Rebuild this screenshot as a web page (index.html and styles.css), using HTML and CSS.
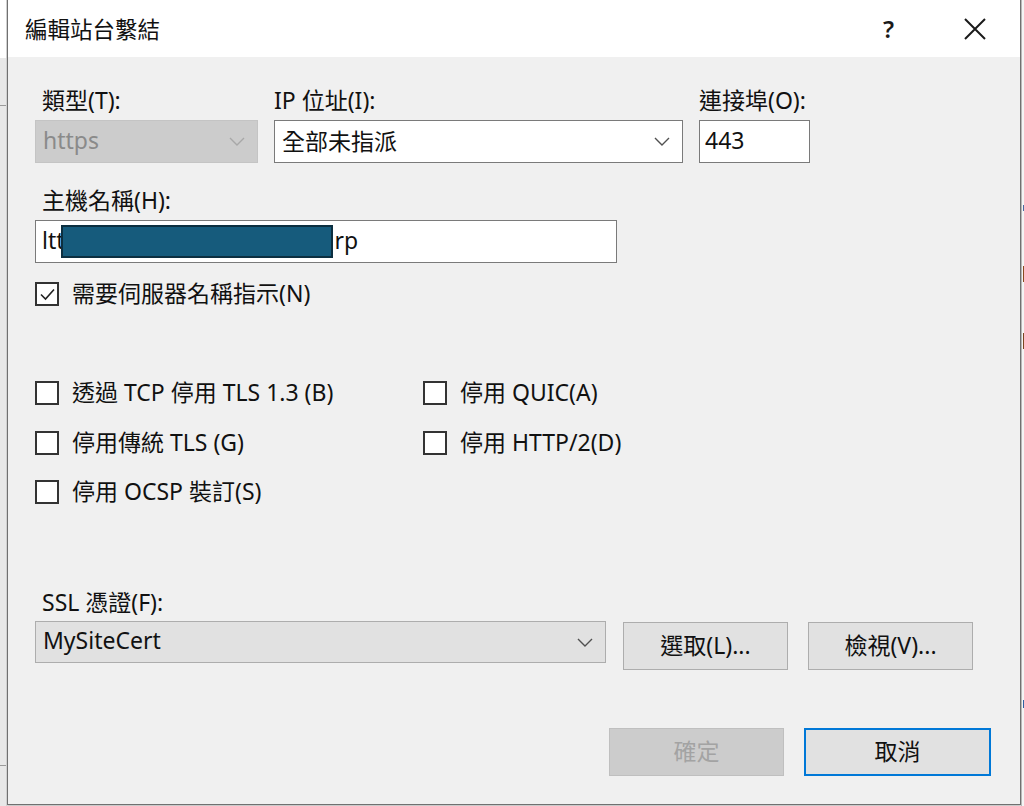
FILE: index.html
```html
<!DOCTYPE html>
<html lang="zh-Hant">
<head>
<meta charset="utf-8">
<title>編輯站台繫結</title>
<link rel="stylesheet" href="styles.css">
</head>
<body>
<div class="screen">
  <div class="bg-left"><span class="bg-tick t1"></span><span class="bg-tick t2"></span></div>
  <div class="dialog">
    <div class="titlebar">
      <div class="title">編輯站台繫結</div>
      <div class="title-actions">
        <span class="help">?</span>
        <svg class="close" width="22" height="22" viewBox="0 0 22 22"><path d="M1 1 L21 21 M21 1 L1 21" stroke="#1a1a1a" stroke-width="2" fill="none"/></svg>
      </div>
    </div>
    <div class="content">
      <div class="row-top">
        <div class="field">
          <div class="label indent">類型(T):</div>
          <div class="select disabled"><span class="txt">https</span>
            <svg class="chev" width="16" height="9" viewBox="0 0 16 9"><path d="M1 1 L8 8 L15 1" stroke="#a8a8a8" stroke-width="1.4" fill="none"/></svg></div>
        </div>
        <div class="field">
          <div class="label">IP 位址(I):</div>
          <div class="select white"><span class="txt">全部未指派</span>
            <svg class="chev" width="16" height="9" viewBox="0 0 16 9"><path d="M1 1 L8 8 L15 1" stroke="#505050" stroke-width="1.4" fill="none"/></svg></div>
        </div>
        <div class="field">
          <div class="label">連接埠(O):</div>
          <div class="textbox"><span class="txt">443</span></div>
        </div>
      </div>

      <div class="label indent host-label">主機名稱(H):</div>
      <div class="textbox host"><span class="txt">ltt</span><span class="redact"></span><span class="txt">rp</span></div>

      <div class="check sni"><span class="box checked"><svg width="19" height="19" viewBox="0 0 19 19"><path d="M3 9.5 L7.5 14 L16 4.5" stroke="#222" stroke-width="1.6" fill="none"/></svg></span><span class="txt">需要伺服器名稱指示(N)</span></div>

      <div class="check-grid">
        <div class="check"><span class="box"></span><span class="txt">透過 TCP 停用 TLS 1.3 (B)</span></div>
        <div class="check"><span class="box"></span><span class="txt">停用 QUIC(A)</span></div>
        <div class="check"><span class="box"></span><span class="txt">停用傳統 TLS (G)</span></div>
        <div class="check"><span class="box"></span><span class="txt">停用 HTTP/2(D)</span></div>
        <div class="check"><span class="box"></span><span class="txt">停用 OCSP 裝訂(S)</span></div>
      </div>

      <div class="label indent ssl-label">SSL 憑證(F):</div>
      <div class="cert-row">
        <div class="select gray"><span class="txt">MySiteCert</span>
          <svg class="chev" width="16" height="9" viewBox="0 0 16 9"><path d="M1 1 L8 8 L15 1" stroke="#505050" stroke-width="1.4" fill="none"/></svg></div>
        <div class="btn"><span class="txt">選取(L)...</span></div>
        <div class="btn"><span class="txt">檢視(V)...</span></div>
      </div>

      <div class="footer">
        <div class="btn ok"><span class="txt">確定</span></div>
        <div class="btn cancel"><span class="txt">取消</span></div>
      </div>
    </div>
  </div>
  <div class="bg-right"><span class="mark m1"></span><span class="mark m2"></span><span class="mark m3"></span><span class="mark m4"></span></div>
</div>
</body>
</html>
```

FILE: styles.css
```css
* { box-sizing: border-box; }
html, body { margin: 0; padding: 0; }
body {
  width: 1024px;
  height: 806px;
  overflow: hidden;
  background: #f3f3f3;
  font-family: "Noto Sans", "Noto Sans CJK TC", sans-serif;
  font-size: 23px;
  color: #111;
}
.screen {
  display: flex;
  height: 806px;
}
.bg-left {
  width: 7px;
  position: relative;
  background: linear-gradient(#ffffff 0, #ffffff 58px, #e8e8e8 58px);
  border-right: 1px solid #d0d0d0;
}
.bg-tick { position: absolute; left: 0; width: 6px; height: 1px; background: #9a9a9a; }
.bg-tick.t1 { top: 105px; }
.bg-tick.t2 { top: 765px; }
.dialog {
  width: 1014px;
  height: 805px;
  background: #f0f0f0;
  border: 1px solid #707070;
  border-top: none;
  display: flex;
  flex-direction: column;
  box-shadow: 0 1px 2px rgba(0,0,0,0.25);
}
.bg-right {
  flex: 1;
  position: relative;
  background: #f4f4f4;
  border-left: 1px solid #b8b8b8;
}
.mark { position: absolute; left: 1px; width: 2px; height: 16px; }
.mark.m1 { top: 205px; background: #4a6aa0; height: 6px; }
.mark.m2 { top: 266px; background: #8a4a20; }
.mark.m3 { top: 333px; background: #7a4520; }
.mark.m4 { top: 700px; background: #3060a0; height: 8px; }

.titlebar {
  height: 57px;
  background: #ffffff;
  display: flex;
  align-items: center;
  justify-content: space-between;
  padding-left: 17px;
  padding-right: 34px;
}
.title { font-size: 22.5px; color: #111; }
.title-actions { display: flex; align-items: center; gap: 70px; }
.help { font-size: 24px; font-weight: 600; color: #1a1a1a; }

.content {
  padding: 28px 27px 0 27px;
  display: flex;
  flex-direction: column;
  flex: 1;
}
.label {
  height: 30px;
  line-height: 30px;
  margin-bottom: 5px;
  white-space: nowrap;
}
.label.indent { padding-left: 7px; }

.txt { padding-bottom: 4px; }

.row-top {
  display: grid;
  grid-template-columns: 223px 409px 111px;
  column-gap: 16px;
}
.select, .textbox {
  height: 43px;
  display: flex;
  align-items: center;
  padding-left: 7px;
  padding-right: 12px;
  white-space: nowrap;
}
.select { justify-content: space-between; }
.select.disabled { background: #cccccc; border: 1px solid #c4c4c4; color: #8a8a8a; }
.select.white { background: #ffffff; border: 1px solid #7a7a7a; }
.select.gray { background: #e1e1e1; border: 1px solid #adadad; height: 42px; width: 571px; }
.textbox { background: #ffffff; border: 1px solid #7a7a7a; padding-left: 5px; }

.host-label { margin-top: 22px; }
.textbox.host { width: 582px; padding-left: 6px; }
.redact {
  display: inline-block;
  width: 272px;
  height: 33px;
  background: #165b7c;
  border: 2px solid #0c2f40;
  margin-left: -4px;
  margin-right: 2px;
  margin-top: -1px;
}

.check {
  display: flex;
  align-items: center;
  height: 30px;
  gap: 13px;
  white-space: nowrap;
}
.box {
  width: 24px;
  height: 24px;
  border: 2px solid #333333;
  background: #ffffff;
  display: flex;
  align-items: center;
  justify-content: center;
  flex: none;
}
.check.sni { margin-top: 16px; }

.check-grid {
  margin-top: 69px;
  display: grid;
  grid-template-columns: 388px auto;
  row-gap: 19.5px;
}

.ssl-label { margin-top: 80px; margin-bottom: 4px; }
.cert-row {
  display: flex;
  align-items: flex-start;
}
.btn {
  display: flex;
  align-items: center;
  justify-content: center;
  background: #e1e1e1;
  border: 1px solid #adadad;
  white-space: nowrap;
}
.cert-row .btn {
  width: 165px;
  height: 48px;
  margin-top: 1px;
  margin-left: 17px;
}
.cert-row .btn + .btn { margin-left: 20px; }

.footer {
  margin-top: 58px;
  display: flex;
  justify-content: flex-end;
  gap: 20px;
  padding-right: 2px;
}
.btn.ok {
  width: 175px;
  height: 48px;
  background: #cccccc;
  border-color: #bfbfbf;
  color: #a3a3a3;
}
.btn.cancel {
  width: 187px;
  height: 48px;
  border: 2px solid #0078d7;
}
```
